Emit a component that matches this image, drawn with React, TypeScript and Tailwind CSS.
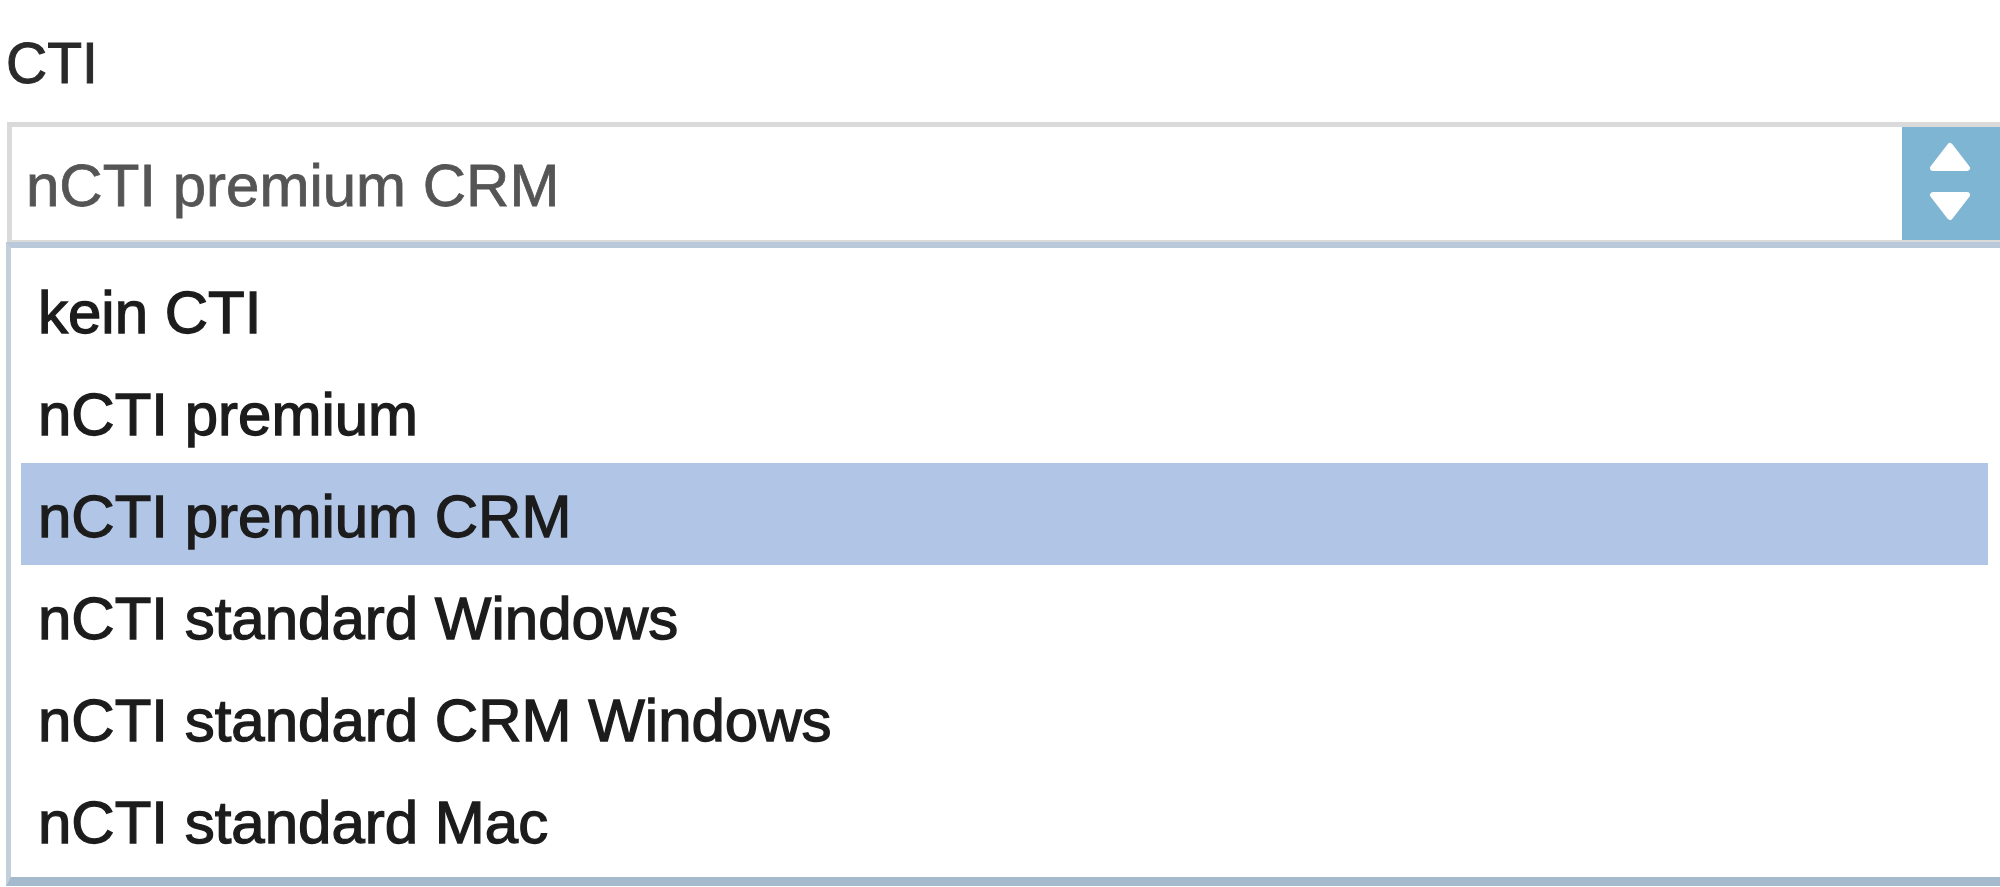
import { useState } from "react";

const options = [
  "kein CTI",
  "nCTI premium",
  "nCTI premium CRM",
  "nCTI standard Windows",
  "nCTI standard CRM Windows",
  "nCTI standard Mac",
];

export default function App() {
  const [selected, setSelected] = useState("nCTI premium CRM");

  return (
    <div className="h-screen overflow-hidden bg-white font-['Liberation_Sans',Arial,sans-serif]">
      <div className="pl-[6px] pt-[30px]">
        <label className="block text-[57px] leading-[66px] text-[#2a2a2a] [-webkit-text-stroke:1px_#2a2a2a]">CTI</label>
      </div>

      {/* select box */}
      <div className="mt-[26px] ml-[7px] flex h-[120px] border-t-[5px] border-l-[5px] border-b-[2px] border-[#dadada] bg-white">
        <div className="flex flex-1 items-center pl-[14px] pt-[4px] text-[60px] leading-[69px] text-[#555] [-webkit-text-stroke:0.8px_#555]">
          {selected}
        </div>
        <div className="flex w-[98px] items-center justify-center bg-[#7db5d3]">
          <svg width="98" height="113" viewBox="0 0 98 113">
            <polygon points="48,19 65,41 31,41" fill="#fff" stroke="#fff" strokeWidth="6" strokeLinejoin="round" />
            <polygon points="31,68 65,68 48,90" fill="#fff" stroke="#fff" strokeWidth="6" strokeLinejoin="round" />
          </svg>
        </div>
      </div>

      {/* open list */}
      <div className="ml-[6px] border-t-[6px] border-l-[5px] border-b-[9px] border-t-[#b9c9d9] border-l-[#c3d0dc] border-b-[#a6bacd] pt-[11px] pr-[12px] pb-[6px] pl-[10px]">
        {options.map((opt) => (
          <div
            key={opt}
            onClick={() => setSelected(opt)}
            className={`flex h-[102px] items-center pl-[17px] pt-[4px] text-[60px] leading-[69px] text-[#1c1c1c] [-webkit-text-stroke:1.3px_#1c1c1c] cursor-pointer ${opt === selected ? "bg-[#b1c6e7]" : ""}`}
          >
            {opt}
          </div>
        ))}
      </div>
    </div>
  );
}
